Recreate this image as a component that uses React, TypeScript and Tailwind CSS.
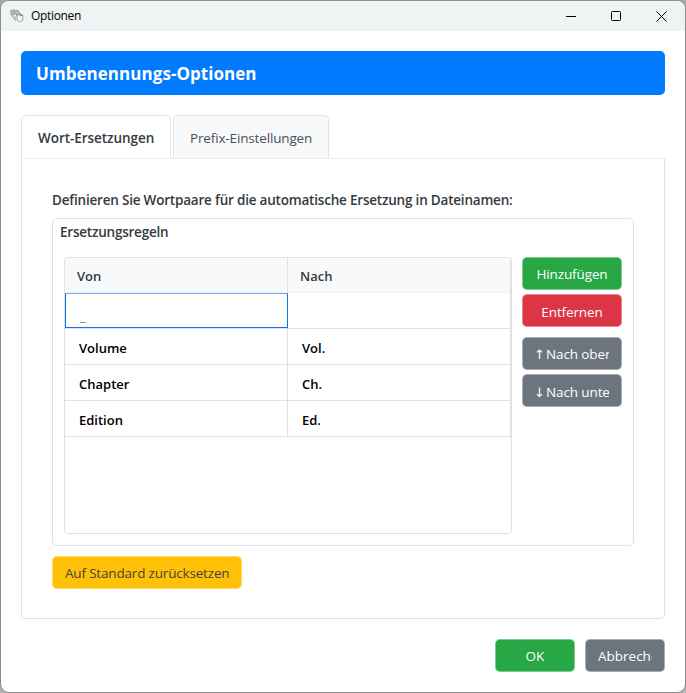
import React from 'react';

const rules = [
  ['Volume', 'Vol.'],
  ['Chapter', 'Ch.'],
  ['Edition', 'Ed.'],
];

function Button({ className, children }: { className: string; children: React.ReactNode }) {
  return (
    <button className={`flex h-[33px] shrink-0 items-center rounded-[5px] border border-white/40 bg-clip-border px-3 text-[13.5px] whitespace-nowrap ${className}`}>
      {children}
    </button>
  );
}

function Arrow({ down = false }: { down?: boolean }) {
  return <span className="mr-[4px] -ml-px w-[8px] shrink-0 text-center font-['DejaVu_Sans'] text-[13px] tracking-normal">{down ? '↓' : '↑'}</span>;
}

function AppIcon() {
  return (
    <svg width="14" height="14" viewBox="0 0 14 14" fill="none" stroke="#959595" strokeWidth=".9">
      <path d="M.7 1.500l4-.7.5 4.200-4 1.500zM2 3l2-.5M2 5l2-.6" fill="#d0d0d0" />
      <path d="M5.500 2l2.500-.7 1.500 2.500-3 3zM1.500 7.500l3 2 1.500-2" fill="#c4c4c4" />
      <path d="M7 7l2.500-2.500 3.300 1.700v5L10 13l-3-2z" fill="#f5f5f5" />
      <path d="M4 10l2 1.300M9.500 4.500l.5 2 2.500-.3" stroke="#707070" />
    </svg>
  );
}

export default function App() {
  return (
    <div className="flex h-[693px] w-[686px] bg-[linear-gradient(to_bottom,#a5a5a5_31px,#2f6fc4_31px,#2f6fc4_93px,#b5b5b5_93px)] px-px pt-px pb-px font-['Open_Sans','Noto_Sans',sans-serif] text-[#343a40]">
      <div className="flex w-full flex-col overflow-hidden rounded-[8px] bg-white shadow-[0_0_0_1px_#8c8c8c]">
        <header className="flex h-[30px] shrink-0 items-center bg-[#f0f3f4] pl-[9px] text-black">
          <AppIcon />
          <span className="ml-[7px] text-[12px] tracking-[-0.33px]">Optionen</span>
          <div className="ml-auto flex items-center gap-[35px] pr-[18px]">
            <svg width="10" height="10" stroke="#000"><path d="M0 5.5h10" /></svg>
            <svg width="10" height="10" fill="none" stroke="#000"><rect x=".5" y=".5" width="9" height="9" rx="1" /></svg>
            <svg width="11" height="11" fill="none" stroke="#000"><path d="M.5.5l10 10M10.500.5l-10 10" /></svg>
          </div>
        </header>
        <main className="flex flex-1 flex-col px-5 pt-5">
          <h1 className="flex h-11 shrink-0 items-center rounded-[5px] bg-[#007bff] pt-px pl-[15px] text-[17px] font-bold tracking-[0.05px] text-white">Umbenennungs-Optionen</h1>
          <div className="mt-5 flex h-[43px] shrink-0 gap-[2px] text-[13.5px]">
            <div className="flex w-[150px] items-center rounded-t-[5px] border border-b-0 border-[#e1e4e8] bg-white pt-0.5 pl-4 font-semibold tracking-[-0.05px] whitespace-nowrap">Wort-Ersetzungen</div>
            <div className="flex w-[156px] items-center rounded-t-[5px] border border-b-0 border-[#e1e4e8] bg-[#f8f9fa] pt-0.5 pl-4 tracking-[-0.15px] whitespace-nowrap text-[#495057]">Prefix-Einstellungen</div>
          </div>
          <section className="flex h-[461px] shrink-0 flex-col rounded-b-[5px] border border-[#dee2e6] border-t-[#eceef0] px-[30px] pt-8">
            <p className="h-[27px] text-[13.5px] leading-[19px] font-semibold tracking-[-0.2px] whitespace-nowrap">Definieren Sie Wortpaare für die automatische Ersetzung in Dateinamen:</p>
            <div className="flex h-[328px] w-[582px] shrink-0 flex-col rounded-[5px] border border-[#dee2e6]">
              <h2 className="h-[38px] shrink-0 pt-1 pl-[7px] text-[13.5px] leading-[19px] font-semibold tracking-[-0.22px]">Ersetzungsregeln</h2>
              <div className="flex gap-[10px] pl-[11px]">
                <div className="h-[277px] w-[448px] overflow-hidden rounded-[4px] border border-[#dee2e6] text-[13px]">
                  <div className="w-[446px] border-r border-[#dee2e6]">
                    <div className="flex h-[35px] border-b border-[#f0f1f3] bg-[#f8f9fa] font-semibold">
                      <div className="flex w-[223px] items-center border-r border-[#dee2e6] pt-1 pl-3">Von</div>
                      <div className="flex items-center pt-1 pl-3">Nach</div>
                    </div>
                    <div className="flex h-9 border-b border-[#dee2e6]">
                      <div className="h-[35px] w-[223px] border border-[#0877ed] border-t-[#6cadf2] pt-[14px] pl-[14px] text-[13px] leading-4 text-[#777]">_</div>
                    </div>
                    {rules.map(([from, to]) => (
                      <div key={from} className="flex h-9 border-b border-[#dee2e6] font-semibold text-black">
                        <div className="flex w-[223px] items-center border-r border-[#dee2e6] pt-1 pl-[14px]">{from}</div>
                        <div className="flex items-center pt-1 pl-[14px]">{to}</div>
                      </div>
                    ))}
                  </div>
                </div>
                <div className="flex w-[100px] flex-col tracking-[-0.12px] text-white">
                  <Button className="justify-center bg-[#28a745] pt-0.5">Hinzufügen</Button>
                  <Button className="mt-1 justify-center bg-[#dc3545] pt-1">Entfernen</Button>
                  <Button className="mt-[10px] bg-[#6c757d] pt-0.5"><span className="flex w-[75px] items-center overflow-hidden"><Arrow />Nach oben</span></Button>
                  <Button className="mt-1 bg-[#6c757d] pt-1"><span className="flex w-[75px] items-center overflow-hidden"><Arrow down />Nach unten</span></Button>
                </div>
              </div>
            </div>
            <Button className="mt-[10px] w-[190px] bg-[#ffc107] pt-0.5 tracking-[-0.18px] text-[#4b4335]">Auf Standard zurücksetzen</Button>
          </section>
          <footer className="mt-5 flex justify-end gap-[10px] text-white">
            <Button className="w-20 justify-center bg-[#28a745] pt-0.5">OK</Button>
            <Button className="w-20 bg-[#6c757d] pt-0.5"><span className="w-[54px] overflow-hidden text-left">Abbrechen</span></Button>
          </footer>
        </main>
      </div>
    </div>
  );
}
